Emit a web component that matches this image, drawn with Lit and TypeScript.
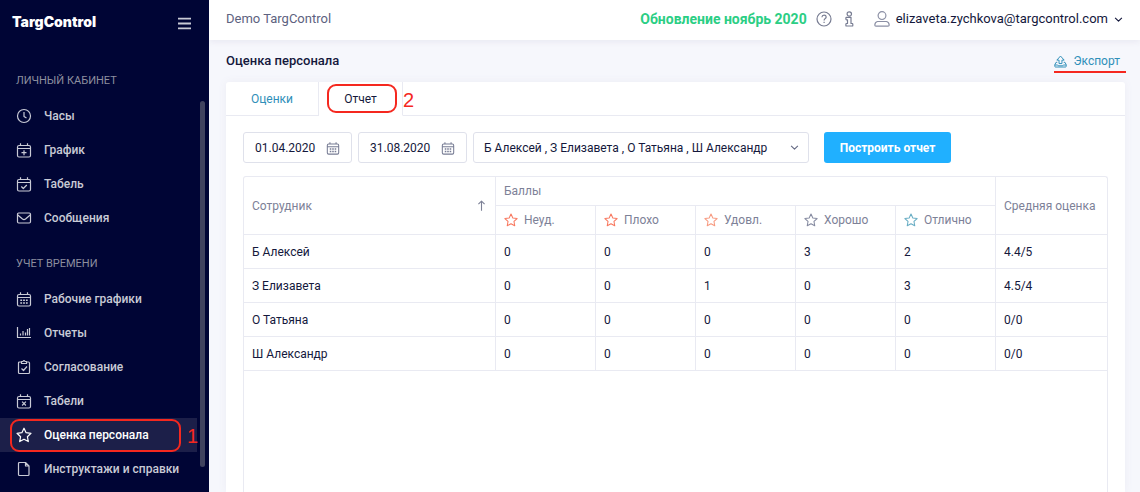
import { LitElement, html, css, svg } from "lit";
import { customElement, property } from "lit/decorators.js";
import { classMap } from "lit/directives/class-map.js";

const calendar = svg`<path d="M3 3.500h10q1.500 0 1.500 1.500v8.500q0 1.500-1.500 1.500h-10q-1.500 0-1.500-1.500v-8.500q0-1.500 1.500-1.500zM1.500 6.500h13M4.500 1.300v2.200M11.500 1.300v2.200"/>`;

const icons: Record<string, unknown> = {
  clock: svg`<circle cx="8" cy="8" r="6.500"/><path d="M8 4v4.500l2.500 1.500"/>`,
  calendarPlus: svg`${calendar}<path d="M8 8.200v5M5.500 10.700h5"/>`,
  calendarCheck: svg`${calendar}<path d="M5.300 10.500l2 2 3.500-3.500"/>`,
  calendarX: svg`${calendar}<path d="M6.100 8.700l3.800 3.800M9.900 8.700l-3.800 3.800"/>`,
  calendar: svg`${calendar}<path stroke-width="1.600" stroke-dasharray="1.800 1" d="M4.300 9.200h7.400M4.300 12h7.400"/>`,
  mail: svg`<rect x="1.500" y="3" width="13" height="10" rx="1.200"/><path d="M1.800 5l4.700 4q1.500 1.200 3 0l4.700-4"/>`,
  chart: svg`<path d="M1.500 2v10.500h13.500M4.500 8.500v2M7 6v4.500M9.500 7.500v3M11.500 4v6.500M13.500 3v7.500"/>`,
  clipboard: svg`<path d="M5.500 3h-2q-1 0-1 1v9.500q0 1 1 1h9q1 0 1-1v-9.500q0-1-1-1h-2M5.500 4.500v-2h1.500q1-2 2 0h1.500v2zM5.500 9.500l2 2 3.500-4"/>`,
  star: svg`<path d="M8 1.200l2.100 4.500 4.900.6-3.600 3.400.9 4.900-4.300-2.400-4.300 2.400.9-4.900-3.600-3.400 4.900-.6z"/>`,
  file: svg`<path d="M9.500 1.500h-6q-1 0-1 1v11q0 1 1 1h8.500q1 0 1-1v-8.500zM9.500 1.500v3.500h3.500"/>`,
  help: svg`<circle cx="8" cy="8" r="7"/><path d="M5.900 6.200q.2-2 2.200-2t2.100 1.800q0 1-1.200 1.700-.9.600-.9 1.700"/><path d="M8.100 10.800v1.200"/>`,
  info: svg`<circle cx="8.300" cy="3" r="2.200"/><path d="M5.500 6.300h4.500v6.200h1.200q.6 0 .6.700v1.200q0 .6-.6.600h-5.700q-.6 0-.6-.6v-1.200q0-.7.6-.7h1v-3.700h-1q-.6 0-.6-.7v-1.100q0-.7.600-.7z"/>`,
  user: svg`<circle cx="8" cy="4.600" r="3.900"/><path d="M3.500 10.500h9q2.500.5 2.700 3.500 0 1.200-1.200 1.200h-12q-1.200 0-1.200-1.200.2-3 2.700-3.500z"/>`,
  upload: svg`<path d="M6.200 10.500v-4.200h-2.700l4.500-5 4.500 5h-2.700v4.200zM4 9h-1.500l-1.500 3v2q0 .8.800.8h12.400q.8 0 .8-.8v-2l-1.500-3h-1.500M1 12.300h3.500l.8 1h5.400l.8-1h3.500"/>`,
  down: svg`<path stroke-width="2" d="M2 5l6 6 6-6"/>`,
  up: svg`<path stroke-width="1.600" d="M8 15.500v-14M3.500 6l4.500-4.500 4.500 4.500"/>`,
  menu: svg`<path stroke-width="2.200" d="M0 2h16M0 8h16M0 14h16"/>`,
};

@customElement("ui-icon")
export class UiIcon extends LitElement {
  static styles = css`
    :host { display: inline-flex; flex: none; width: 16px; height: 16px; }
    .glyph { width: 100%; height: 100%; fill: none; stroke: currentColor; stroke-width: 1.2; stroke-linejoin: round; stroke-linecap: butt; }
  `;
  @property() name = "";
  render() {
    return html`<svg class="glyph" viewBox="0 0 16 16" aria-hidden="true">${icons[this.name]}</svg>`;
  }
}

interface NavItem { icon: string; label: string; active?: boolean; }

const sections: { title: string; items: NavItem[] }[] = [
  {
    title: "ЛИЧНЫЙ КАБИНЕТ",
    items: [
      { icon: "clock", label: "Часы" },
      { icon: "calendarPlus", label: "График" },
      { icon: "calendarCheck", label: "Табель" },
      { icon: "mail", label: "Сообщения" },
    ],
  },
  {
    title: "УЧЕТ ВРЕМЕНИ",
    items: [
      { icon: "calendar", label: "Рабочие графики" },
      { icon: "chart", label: "Отчеты" },
      { icon: "clipboard", label: "Согласование" },
      { icon: "calendarX", label: "Табели" },
      { icon: "star", label: "Оценка персонала", active: true },
      { icon: "file", label: "Инструктажи и справки" },
    ],
  },
];

const grades = [
  { label: "Неуд.", tone: "bad" },
  { label: "Плохо", tone: "bad" },
  { label: "Удовл.", tone: "fair" },
  { label: "Хорошо", tone: "good" },
  { label: "Отлично", tone: "best" },
];

const rows = [
  { name: "Б Алексей", scores: [0, 0, 0, 3, 2], average: "4.4/5" },
  { name: "З Елизавета", scores: [0, 0, 1, 0, 3], average: "4.5/4" },
  { name: "О Татьяна", scores: [0, 0, 0, 0, 0], average: "0/0" },
  { name: "Ш Александр", scores: [0, 0, 0, 0, 0], average: "0/0" },
];

@customElement("app-root")
export class AppRoot extends LitElement {
  static styles = css`
    :host {
      display: grid;
      grid-template-columns: 209px minmax(0, 1fr);
      height: 100vh;
      overflow: hidden;
      background: #f6f7fc;
      color: #14183c;
      font: 400 12px/16px Roboto, "Liberation Sans", sans-serif;
    }
    * { box-sizing: border-box; }
    button, input, select { font: inherit; color: inherit; }
    button { border: 0; padding: 0; background: none; }
    a { color: inherit; text-decoration: none; }

    .sidebar { position: relative; z-index: 1; display: flex; flex-direction: column; min-height: 0; background: #000535; color: #c9cbd6; font-weight: 500; }
    .brand { display: flex; align-items: center; justify-content: space-between; height: 44px; padding: 0 18px 0 12px; }
    .logo { color: #fff; font: 900 14px/20px Inter, sans-serif; }
    .menu { display: flex; margin-top: 3px; }
    .menu ui-icon { width: 13px; height: 13px; }
    .scroller { position: relative; flex: 1; min-height: 0; padding: 29px 12px 0 0; }
    .thumb { position: absolute; right: 4px; top: 57px; width: 5px; height: 366px; border-radius: 3px; background: #40435f; }
    .caption { margin: 0 0 10px; padding-left: 16px; color: #8d8f9f; font-size: 11px; font-weight: 400; line-height: 16px; }
    .list { margin: 0 0 21px; padding: 0; list-style: none; }
    .item { position: relative; display: flex; align-items: center; gap: 12px; height: 34px; padding-left: 16px; }
    .item.active { background: #1c1f49; color: #fff; }

    .mark { position: absolute; border: 2px solid #f5281f; border-radius: 9px; pointer-events: none; }
    .item .mark { inset: 1px 16px 0 10px; }
    .tab .mark { inset: 2px 5px 2px 8px; }
    .number { position: absolute; color: #f5281f; font: 400 20px/24px "Liberation Sans", sans-serif; }
    .item .number { left: 187px; top: 6px; }
    .tab .number { left: 84px; top: 6px; }

    .main { display: flex; flex-direction: column; min-width: 0; min-height: 0; }
    .topbar { display: flex; align-items: center; height: 40px; flex: none; padding: 0 17px 2px 17px; background: #fff; box-shadow: 0 2px 6px #e9e9f2; }
    .company { flex: 1; color: #5d6280; font-size: 13px; }
    .news { color: #2bce84; font-size: 14px; font-weight: 700; }
    .tool { display: flex; margin-left: 9px; color: #777c92; }
    .account { display: flex; align-items: center; gap: 6px; margin-left: 17px; font-size: 13px; }
    .account ui-icon:first-child { color: #8c90a5; }
    .small { width: 9px; height: 9px; }

    .heading { display: flex; align-items: center; justify-content: space-between; height: 42px; flex: none; padding: 0 14px 0 17px; }
    .title { margin: 0; font-size: 13px; font-weight: 500; }
    .export { display: flex; align-items: center; gap: 6px; padding: 4px 6px 2px 0; border-bottom: 2px solid #f5281f; color: #2f8fb9; }
    .export ui-icon { width: 13px; height: 13px; }

    .panel { display: flex; flex-direction: column; flex: 1; min-height: 0; margin: 0 15px 0 17px; border-radius: 3px 3px 0 0; background: #fff; box-shadow: 0 0 8px #ececf4; }
    .tabs { display: flex; height: 34px; flex: none; }
    .tab { position: relative; border-bottom: 1px solid #e9eaf2; }
    .first { width: 93px; border-right: 1px solid #e9eaf2; color: #2f8fb9; }
    .current { width: 84px; border-right: 1px solid #e9eaf2; border-bottom-color: transparent; }
    .rest { flex: 1; border-bottom: 1px solid #e9eaf2; }

    .filters { display: flex; gap: 6px; height: 31px; flex: none; margin: 16px 17px 13px; }
    .date { display: flex; align-items: center; width: 109px; border: 1px solid #dfe1eb; border-radius: 3px; padding: 0 11px; color: #777c94; }
    .date input { flex: 1; min-width: 0; border: 0; padding: 0; background: none; color: #14183c; outline: 0; }
    .date ui-icon { width: 14px; height: 14px; }
    .people { position: relative; display: flex; align-items: center; width: 336px; margin-right: 9px; }
    .people select { width: 100%; height: 100%; appearance: none; border: 1px solid #dfe1eb; border-radius: 3px; padding: 0 24px 0 10px; background: #fff; }
    .people ui-icon { position: absolute; right: 10px; color: #666b85; pointer-events: none; }
    .build { width: 127px; border-radius: 3px; background: #20b0ff; color: #fff; font-weight: 700; }

    .sheet { flex: 1; min-height: 0; margin: 0 17px; border: 1px solid #e9eaf2; border-bottom: 0; border-radius: 3px 3px 0 0; }
    .grid { width: 100%; border-collapse: separate; border-spacing: 0; table-layout: fixed; }
    .grid th, .grid td { padding: 0 8px; border: solid #e9eaf2; border-width: 0 1px 1px 0; text-align: left; }
    .grid .end { border-right: 0; }
    .grid th { color: #7d8197; font-weight: 400; height: 29px; }
    .grid td { height: 34px; }
    .grade { width: 100px; }
    .average { width: 111px; }
    .sort { display: flex; align-items: center; justify-content: space-between; }
    .sort ui-icon { width: 11px; height: 11px; }
    .rate { display: flex; align-items: center; gap: 6px; }
    .rate ui-icon { width: 14px; height: 14px; }
    .bad ui-icon { color: #f8785f; }
    .fair ui-icon { color: #f79a80; }
    .good ui-icon { color: #858aa0; }
    .best ui-icon { color: #68adc4; }
  `;

  private navItem(item: NavItem) {
    return html`<li>
      <a class=${classMap({ item: true, active: !!item.active })} href="#">
        <ui-icon name=${item.icon}></ui-icon>${item.label}
        ${item.active ? html`<span class="mark"></span><span class="number">1</span>` : ""}
      </a>
    </li>`;
  }

  private dateField(label: string, value: string) {
    return html`<label class="date">
      <input type="text" aria-label=${label} .value=${value} />
      <ui-icon name="calendar"></ui-icon>
    </label>`;
  }

  render() {
    return html`
      <aside class="sidebar">
        <div class="brand">
          <a class="logo" href="#">TargControl</a>
          <button class="menu" aria-label="Меню"><ui-icon name="menu"></ui-icon></button>
        </div>
        <nav class="scroller">
          ${sections.map((s) => html`
            <h2 class="caption">${s.title}</h2>
            <ul class="list">${s.items.map((i) => this.navItem(i))}</ul>
          `)}
          <span class="thumb"></span>
        </nav>
      </aside>
      <div class="main">
        <header class="topbar">
          <span class="company">Demo TargControl</span>
          <a class="news" href="#">Обновление ноябрь 2020</a>
          <button class="tool" aria-label="Помощь"><ui-icon name="help"></ui-icon></button>
          <button class="tool" aria-label="Информация"><ui-icon name="info"></ui-icon></button>
          <button class="account">
            <ui-icon name="user"></ui-icon>elizaveta.zychkova@targcontrol.com<ui-icon class="small" name="down"></ui-icon>
          </button>
        </header>
        <div class="heading">
          <h1 class="title">Оценка персонала</h1>
          <a class="export" href="#"><ui-icon name="upload"></ui-icon>Экспорт</a>
        </div>
        <section class="panel">
          <div class="tabs" role="tablist">
            <button class="tab first" role="tab" aria-selected="false">Оценки</button>
            <button class="tab current" role="tab" aria-selected="true">
              Отчет<span class="mark"></span><span class="number">2</span>
            </button>
            <span class="rest"></span>
          </div>
          <form class="filters">
            ${this.dateField("Дата начала", "01.04.2020")}
            ${this.dateField("Дата окончания", "31.08.2020")}
            <label class="people">
              <select aria-label="Сотрудники">
                <option>Б Алексей , З Елизавета , О Татьяна , Ш Александр</option>
              </select>
              <ui-icon class="small" name="down"></ui-icon>
            </label>
            <button class="build" type="button">Построить отчет</button>
          </form>
          <div class="sheet">
            <table class="grid">
              <colgroup>
                <col />
                ${grades.map(() => html`<col class="grade" />`)}
                <col class="average" />
              </colgroup>
              <thead>
                <tr>
                  <th rowspan="2"><span class="sort">Сотрудник<ui-icon name="up"></ui-icon></span></th>
                  <th colspan="5">Баллы</th>
                  <th class="end" rowspan="2">Средняя оценка</th>
                </tr>
                <tr>
                  ${grades.map((g) => html`<th><span class="rate ${g.tone}"><ui-icon name="star"></ui-icon>${g.label}</span></th>`)}
                </tr>
              </thead>
              <tbody>
                ${rows.map((r) => html`<tr>
                  <td>${r.name}</td>
                  ${r.scores.map((n) => html`<td>${n}</td>`)}
                  <td class="end">${r.average}</td>
                </tr>`)}
              </tbody>
            </table>
          </div>
        </section>
      </div>
    `;
  }
}
